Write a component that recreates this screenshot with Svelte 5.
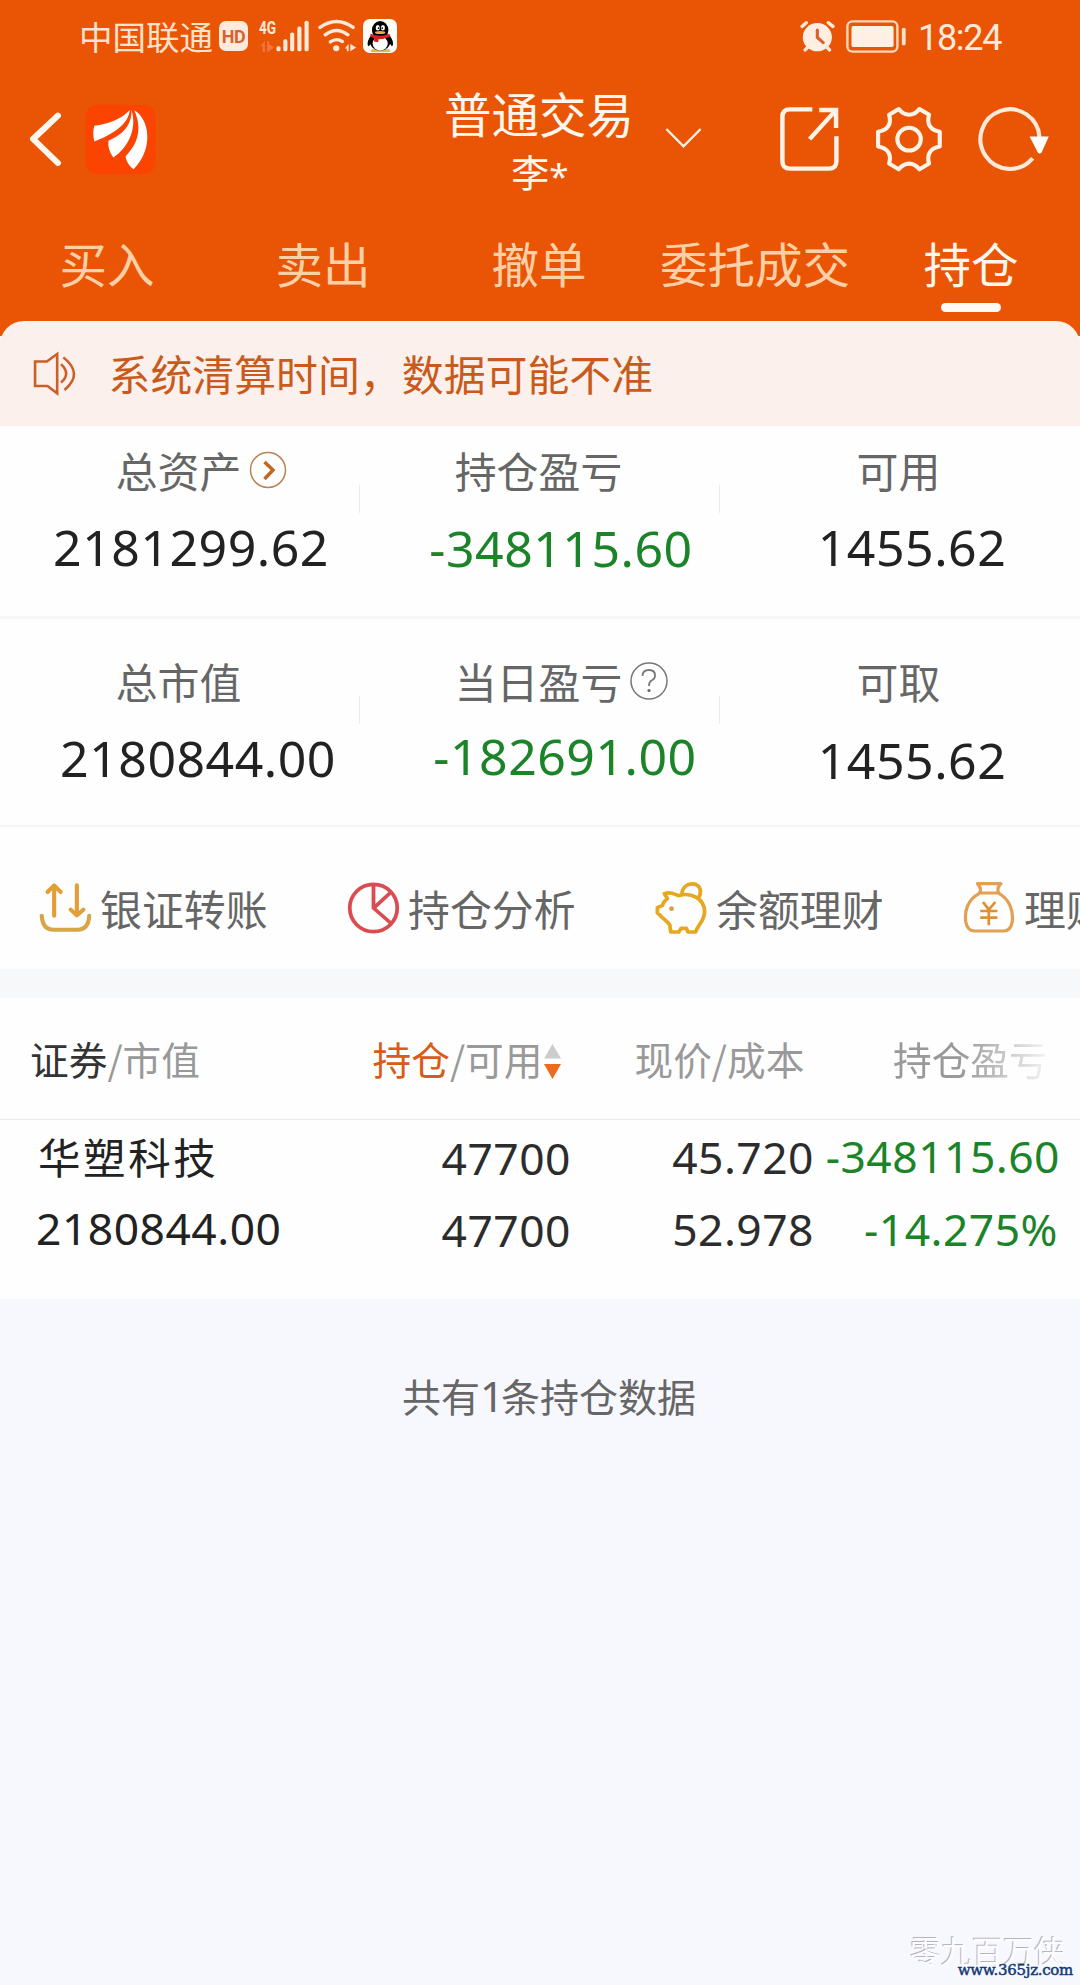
<script>
  const tabs = ['买入', '卖出', '撤单', '委托成交', '持仓'];
  let activeTab = $state('持仓');

  // dx / dy: 数値の微調整（px）
  const stats = [
    [
      { label: '总资产', value: '2181299.62', icon: 'arrow', dx: 11, dy: 0 },
      { label: '持仓盈亏', value: '-348115.60', down: true, dx: 21, dy: 1 },
      { label: '可用', value: '1455.62', dx: 12, dy: 0 }
    ],
    [
      { label: '总市值', value: '2180844.00', dx: 18, dy: 0 },
      { label: '当日盈亏', value: '-182691.00', icon: 'help', down: true, dx: 25, dy: -2 },
      { label: '可取', value: '1455.62', dx: 12, dy: 2 }
    ]
  ];

  const actions = [
    { icon: 'transfer', label: '银证转账' },
    { icon: 'pie', label: '持仓分析' },
    { icon: 'pig', label: '余额理财' },
    { icon: 'bag', label: '理财' }
  ];

  const holdings = [
    {
      name: '华塑科技',
      marketValue: '2180844.00',
      amount: '47700',
      available: '47700',
      price: '45.720',
      cost: '52.978',
      profit: '-348115.60',
      rate: '-14.275%'
    }
  ];
</script>

<div class="page">
  <header>
    <div class="status">
      <span class="carrier">中国联通</span>
      <span class="hd">HD</span>
      <svg class="signal" viewBox="753 57 146 101" width="50" height="34" preserveAspectRatio="none">
        <text x="753" y="102" font-size="54" textLength="50" lengthAdjust="spacingAndGlyphs" class="net">4G</text>
        <g fill="#f4743f">
          <path d="M757 138 L770 122 V155 H764 V138Z" />
          <path d="M777 122 H783 V132 L797 142 L783 152 L777 155Z" />
        </g>
        <g fill="#ffe9da">
          <rect x="804" y="138" width="12" height="15" rx="5" />
          <rect x="824" y="117" width="12" height="36" rx="5" />
          <rect x="844" y="97" width="12" height="56" rx="5" />
          <rect x="865" y="79" width="12" height="74" rx="5" />
          <rect x="886" y="62" width="12" height="91" rx="5" />
        </g>
      </svg>
      <svg class="wifi" viewBox="925 57 112 101" width="38.5" height="34" preserveAspectRatio="none">
        <g fill="none" stroke="#ffe9da" stroke-width="10" stroke-linecap="round">
          <path d="M931 82 Q979 47 1027 82" />
          <path d="M946 104 Q979 78 1012 104" />
          <path d="M961 125 Q979 112 996 124" />
        </g>
        <g fill="#ffe9da">
          <circle cx="978" cy="144" r="9" />
          <path d="M1003 145 L1014 131 V153 H1009 V145Z" />
          <path d="M1019 131 L1036 142 L1019 153Z" />
        </g>
      </svg>
      <svg class="qq" viewBox="1054 57 99 101" width="34" height="34" preserveAspectRatio="none">
        <rect x="1054" y="57" width="99" height="101" rx="20" fill="#fffdf8" />
        <ellipse cx="1092" cy="151" rx="16" ry="5" fill="#e8b64a" />
        <ellipse cx="1118" cy="151" rx="16" ry="5" fill="#e8b64a" />
        <path d="M1079 104 C1066 120 1065 136 1071 138 L1080 126 M1130 104 C1143 120 1144 136 1138 138 L1129 126" />
        <ellipse cx="1104" cy="123" rx="30" ry="28" />
        <ellipse cx="1104" cy="130" rx="22" ry="21" fill="#fff" />
        <ellipse cx="1104" cy="90" rx="24" ry="27" />
        <ellipse cx="1097" cy="83" rx="6" ry="8" fill="#fff" />
        <ellipse cx="1112" cy="83" rx="6" ry="8" fill="#fff" />
        <circle cx="1099" cy="84" r="2.5" />
        <circle cx="1110" cy="84" r="2.5" />
        <ellipse cx="1104" cy="97" rx="15" ry="4.5" fill="#e8b04a" />
        <path d="M1076 101 Q1104 112 1131 101 L1133 110 Q1118 117 1100 116 L1098 126 L1086 124 L1087 114 L1075 109Z" fill="#d5202c" />
      </svg>
      <svg class="alarm" viewBox="757 60 101 98" width="35" height="33" preserveAspectRatio="none">
        <circle cx="807" cy="111" r="42" fill="#ffeee2" />
        <g fill="none" stroke="#ffe9da" stroke-width="10" stroke-linecap="round">
          <path d="M763 79 L775 68 M839 68 L852 79 M780 140 L772 149 M834 140 L842 149" />
        </g>
        <path d="M807 90 V112 L824 127" fill="none" stroke="#d9622c" stroke-width="9" stroke-linecap="round" />
      </svg>
      <svg class="battery" viewBox="890 60 174 98" width="60" height="33" preserveAspectRatio="none">
        <rect x="894" y="64" width="145" height="90" rx="15" fill="none" stroke="#ffd6ba" stroke-width="7" />
        <rect x="906" y="78" width="122" height="62" rx="5" fill="#fff0e6" />
        <rect x="1052" y="84" width="11" height="51" rx="4" fill="#ffe2cd" />
      </svg>
      <span class="time">18:24</span>
    </div>

    <nav>
      <div class="nav-left">
        <svg viewBox="85 335 96 165" width="33" height="55" preserveAspectRatio="none">
          <path d="M169 346 L97 416 L169 488" fill="none" stroke="#fff6ee" stroke-width="18" stroke-linecap="round" stroke-linejoin="round" />
        </svg>
        <svg class="logo" viewBox="245 310 215 218" width="74" height="73" preserveAspectRatio="none">
          <rect x="250" y="315" width="203" height="207" rx="34" fill="#fb4402" />
          <g fill="#fff">
            <path d="M275 378 C318 373 355 357 378 331 C375 372 332 402 275 425 C271 408 271 392 275 378Z" />
            <path d="M383 331 C400 385 374 444 330 473 C318 456 314 440 316 423 C357 404 384 378 383 331Z" />
            <path d="M391 332 C434 356 450 446 389 508 C376 497 367 484 366 469 C404 430 414 384 391 332Z" />
          </g>
        </svg>
      </div>
      <div class="title">
        <h1>普通交易</h1>
        <p>李<span>*</span></p>
      </div>
      <svg class="caret" viewBox="364 380 108 66" width="37" height="22" preserveAspectRatio="none">
        <path d="M368 386 L418 438 L468 386" fill="none" stroke="#fff0e4" stroke-width="7" />
      </svg>
      <div class="nav-right">
        <svg viewBox="699 320 173 197" width="59.5" height="66" preserveAspectRatio="none">
          <g fill="none" stroke="#fff3e8" stroke-width="13">
            <path d="M793 330 H728 Q706 330 706 352 V485 Q706 507 728 507 H841 Q863 507 863 485 V410" />
            <path d="M813 332 H862 V386 M861 333 L785 419" />
          </g>
        </svg>
        <svg viewBox="977 318 196 197" width="67.5" height="66" preserveAspectRatio="none">
          <g fill="none" stroke="#fff3e8" stroke-width="12" stroke-linejoin="round">
            <path d="M1046 327 C1055 339 1065 344 1076 344 S1097 339 1106 327 L1134 344 C1126 372 1138 390 1165 395 V439 C1138 444 1126 462 1134 490 L1106 507 C1097 495 1087 490 1076 490 S1055 495 1046 507 L1018 490 C1026 462 1014 444 986 439 V395 C1014 390 1026 372 1018 344Z" />
            <circle cx="1076" cy="417" r="34" />
          </g>
        </svg>
        <svg viewBox="1274 318 208 197" width="71.5" height="66" preserveAspectRatio="none">
          <path d="M1433 474 A86 89 0 1 1 1453 412" fill="none" stroke="#ffe9da" stroke-width="12" />
          <path d="M1424 409 H1480 L1459 457 Q1453 463 1448 457Z" fill="#fff" />
        </svg>
      </div>
    </nav>

    <div class="tabs">
      {#each tabs as tab}
        <button class:active={tab === activeTab} onclick={() => (activeTab = tab)}>{tab}</button>
      {/each}
    </div>
  </header>

  <div class="notice">
    <svg viewBox="96 452 126 134" width="43.5" height="45" preserveAspectRatio="none">
      <g fill="none" stroke="#cb5f28" stroke-width="7.5">
        <path d="M166 461 V578 L138 556 H102 V483 H136Z" />
        <path d="M177 491 Q207 519 177 546" />
        <path d="M184 471 Q244 520 187 568" />
      </g>
    </svg>
    <span>系统清算时间，数据可能不准</span>
  </div>

  {#each stats as row, i}
    <section class="stats" class:second={i === 1}>
      {#each row as s}
        <div class="stat">
          <div class="label">
            {s.label}
            {#if s.icon === 'arrow'}
              <svg class="mark" viewBox="0 0 38 38" width="38" height="38">
                <circle cx="19" cy="19" r="17.5" fill="none" stroke="#b98352" stroke-width="1.5" />
                <path d="M15.5 11 L24 19 L15.5 28" fill="none" stroke="#c4671e" stroke-width="3.5" />
              </svg>
            {:else if s.icon === 'help'}
              <svg class="mark" viewBox="0 0 38 38" width="38" height="38">
                <circle cx="19" cy="19" r="18" fill="none" stroke="#777" stroke-width="1.5" />
                <path d="M12.5 14 Q12.5 8 19 8 Q25 8 25 13.5 Q25 17 21.5 18.5 Q19 20 19 24" fill="none" stroke="#777" stroke-width="1.8" />
                <circle cx="19" cy="28.5" r="1.6" fill="#666" />
              </svg>
            {/if}
          </div>
          <div class="value" class:down={s.down} style:transform="translate({s.dx}px, {s.dy}px)">{s.value}</div>
        </div>
      {/each}
    </section>
  {/each}

  <section class="actions">
    {#each actions as a}
      <div class="action">
        {#if a.icon === 'transfer'}
          <svg viewBox="113 97 154 156" width="53" height="52" preserveAspectRatio="none">
            <g fill="none" stroke="#e39e37" stroke-width="12" stroke-linecap="round" stroke-linejoin="round">
              <path d="M157 198 V108 M138 127 L157 107 L176 127" />
              <path d="M223 107 V196 M205 180 L223 197 L242 180" />
              <path d="M121 198 Q123 240 155 240 H225 Q257 240 259 198" stroke="#d8a548" />
            </g>
          </svg>
        {:else if a.icon === 'pie'}
          <svg viewBox="1007 97 154 156" width="53" height="52" preserveAspectRatio="none">
            <g fill="none" stroke="#d94c52" stroke-width="11">
              <ellipse cx="1084" cy="175" rx="69" ry="71" />
              <path d="M1084 104 V175 L1134 220 M1086 174 L1132 130" />
            </g>
          </svg>
        {:else if a.icon === 'pig'}
          <svg viewBox="334 97 154 156" width="53" height="52" preserveAspectRatio="none">
            <g fill="none" stroke="#e5a820" stroke-width="11" stroke-linejoin="round">
              <path d="M361 132 C378 126 390 132 402 138 C440 126 478 148 478 186 C478 214 458 226 452 247 H430 L425 236 H410 L403 247 H380 L377 226 C368 212 356 207 350 198 L341 190 V174 L356 167 C357 158 364 152 370 147Z" />
              <path d="M412 132 C416 94 464 94 466 124 Q466 138 459 146" />
            </g>
            <circle cx="382" cy="177" r="7" fill="#d9a04a" />
          </svg>
        {:else}
          <svg viewBox="1228 97 154 156" width="53" height="52" preserveAspectRatio="none">
            <g fill="none" stroke="#e2a054" stroke-width="9.5" stroke-linejoin="round">
              <path d="M1270 102 H1338 Q1324 118 1332 130 H1276 Q1284 118 1270 102Z" />
              <path d="M1276 131 C1240 150 1232 186 1236 216 Q1241 244 1262 244 H1345 Q1367 244 1371 216 C1375 186 1364 148 1332 131" />
              <path d="M1286 157 L1303 180 L1322 157 M1303 180 V227 M1278 184 H1328 M1278 204 H1328" stroke="#e08f35" stroke-width="8" />
            </g>
          </svg>
        {/if}
        <span>{a.label}</span>
      </div>
    {/each}
  </section>

  <div class="table-head">
    <div><b>证券</b>/市值</div>
    <div>
      <b class="sorted">持仓</b>/可用
      <svg class="sort" viewBox="0 0 17 36" width="17" height="36">
        <path d="M8.5 0 L17 14.5 H0Z" fill="#ccc" />
        <path d="M0 20 H17 L8.5 35Z" fill="#ee6a1c" />
      </svg>
    </div>
    <div>现价/成本</div>
    <div class="fade">持仓盈亏</div>
  </div>

  {#each holdings as h}
    <div class="holding">
      <div class="cell name">
        <div class="stock">{h.name}</div>
        <div>{h.marketValue}</div>
      </div>
      <div class="cell amount">
        <div>{h.amount}</div>
        <div>{h.available}</div>
      </div>
      <div class="cell price">
        <div>{h.price}</div>
        <div>{h.cost}</div>
      </div>
      <div class="cell profit">
        <div>{h.profit}</div>
        <div class="rate">{h.rate}</div>
      </div>
    </div>
  {/each}

  <p class="total">共有<span>1</span>条持仓数据</p>

  <div class="watermark">
    <span class="author">零九百万侠</span>
    <span class="site">www.365jz.com</span>
  </div>
</div>

<style>
  :global(body) {
    margin: 0;
    background: #f7f8fd;
  }
  .page {
    position: relative;
    width: 1080px;
    height: 1985px;
    overflow: hidden;
    background: #f7f8fd;
    font-family: 'Noto Sans CJK SC', 'Noto Sans', sans-serif;
  }
  svg {
    display: block;
    flex: none;
  }
  h1,
  p {
    margin: 0;
    font-weight: 400;
  }

  header {
    height: 336px;
    background: #e95504;
    color: #fff6ee;
  }
  .status {
    display: flex;
    align-items: center;
    box-sizing: border-box;
    height: 72px;
    padding-left: 79px;
  }
  .carrier {
    width: 140px;
    font-size: 33.5px;
    line-height: 44px;
    color: #ffe2cc;
    margin-top: -1px;
  }
  .hd {
    width: 29px;
    height: 30px;
    border-radius: 7px;
    background: #ffeadb;
    color: #d9622c;
    font-family: Roboto, sans-serif;
    font-size: 18px;
    font-weight: 700;
    line-height: 31px;
    text-align: center;
    letter-spacing: -0.5px;
  }
  .signal {
    margin-left: 11px;
    overflow: visible;
  }
  .net {
    font-family: Roboto, sans-serif;
    font-weight: 700;
    fill: #ffe9da;
  }
  .wifi {
    margin-left: 9px;
  }
  .qq {
    margin-left: 6px;
  }
  .alarm {
    margin-left: auto;
  }
  .battery {
    margin-left: 11px;
  }
  .time {
    width: 162px;
    padding-left: 12px;
    font-family: Roboto, sans-serif;
    font-size: 36px;
    font-weight: 400;
    line-height: 40px;
    letter-spacing: -1.3px;
    color: #ffe9da;
    margin-top: 4px;
  }

  nav {
    display: flex;
    align-items: center;
    height: 132px;
    padding-top: 2px;
    box-sizing: border-box;
  }
  .nav-left {
    display: flex;
    align-items: center;
    gap: 22px;
    width: 415px;
    padding-left: 29px;
  }
  .title {
    width: 190px;
    text-align: center;
    margin-top: -2px;
  }
  h1 {
    font-size: 47.5px;
    line-height: 60px;
  }
  .title p {
    font-size: 38px;
    line-height: 44px;
    margin-top: 6px;
    padding-left: 2px;
  }
  .title span {
    font-family: 'Noto Sans', sans-serif;
    font-size: 35px;
    line-height: 1;
    vertical-align: -2px;
  }
  .caret {
    margin: -3px 0 0 31px;
  }
  .nav-right {
    display: flex;
    gap: 35.5px;
    margin: -1px 0 0 auto;
    padding-right: 31px;
  }

  .tabs {
    display: grid;
    grid-template-columns: repeat(5, 1fr);
    padding-top: 29px;
    margin-left: -1px;
    margin-right: 1px;
  }
  button {
    display: flex;
    flex-direction: column;
    align-items: center;
    padding: 0;
    border: 0;
    background: none;
    font-family: inherit;
    font-size: 47.5px;
    line-height: 60px;
    color: #ffd0a8;
    white-space: nowrap;
  }
  button.active {
    color: #fff6ee;
  }
  button.active::after {
    content: '';
    width: 60px;
    height: 9px;
    margin-top: 10px;
    border-radius: 5px;
    background: #fffaf5;
  }

  .notice {
    position: relative;
    display: flex;
    align-items: center;
    height: 105px;
    margin-top: -15px;
    padding-left: 33px;
    border-radius: 24px 24px 0 0;
    background: #fbf0eb;
    color: #c95a1c;
    font-size: 41.9px;
    line-height: 50px;
  }
  .notice svg {
    margin-top: -1px;
  }
  .notice span {
    margin: -2px 0 0 32px;
  }

  .stats {
    display: grid;
    grid-template-columns: repeat(3, 360px);
    box-sizing: border-box;
    height: 193px;
    padding-top: 19px;
    background: #fefefe;
    border-bottom: 3px solid #f7f7f7;
  }
  .stats.second {
    height: 208px;
    padding-top: 37px;
    border-bottom: 2px solid #f4f4f4;
  }
  .stat {
    position: relative;
    text-align: center;
  }
  .stat + .stat::before {
    content: '';
    position: absolute;
    left: -1px;
    top: 40px;
    width: 1px;
    height: 28px;
    background: #ececec;
  }
  .label {
    position: relative;
    left: -1.5px;
    width: max-content;
    margin: 0 auto;
    font-size: 41.9px;
    line-height: 50px;
    color: #666;
  }
  .mark {
    position: absolute;
    left: calc(100% + 8px);
    top: 6px;
  }
  .value {
    margin-top: 22px;
    font-family: 'Noto Sans', sans-serif;
    font-size: 50px;
    line-height: 60px;
    letter-spacing: 0.5px;
    color: #222;
  }
  .value.down {
    color: #1c8428;
  }

  .actions {
    display: flex;
    box-sizing: border-box;
    height: 142px;
    padding: 55px 0 0 39px;
    background: #fefefe;
    overflow: hidden;
  }
  .action {
    display: flex;
    flex: none;
    width: 308px;
    gap: 8px;
    font-size: 41.9px;
    line-height: 52px;
    color: #666;
    white-space: nowrap;
  }

  .table-head {
    display: grid;
    grid-template-columns: 342.5px 262px 258.5px 170px;
    box-sizing: border-box;
    height: 151px;
    padding: 35px 0 0 30px;
    border-top: 29px solid #f7f8fa;
    border-bottom: 1px solid #e9e9ec;
    background: #fefefe;
    color: #999;
    font-size: 38.7px;
    line-height: 50px;
    white-space: nowrap;
  }
  .table-head div {
    display: flex;
  }
  .table-head b {
    font-weight: 400;
    color: #333;
  }
  .table-head .sorted {
    color: #d85b17;
  }
  .sort {
    margin: 11px 0 0 2px;
  }
  .fade {
    -webkit-mask-image: linear-gradient(90deg, #000 40%, transparent 96%);
    mask-image: linear-gradient(90deg, #000 40%, transparent 96%);
  }

  .holding {
    display: grid;
    grid-template-columns: 300px 235px 243px 246px;
    box-sizing: border-box;
    height: 179px;
    padding-left: 36px;
    background: #fefefe;
    color: #2c2c2c;
    font-family: 'Noto Sans', sans-serif;
    font-size: 44.4px;
    line-height: 72px;
    letter-spacing: 0.5px;
    white-space: nowrap;
  }
  .cell {
    text-align: right;
  }
  .name {
    text-align: left;
    color: #222;
    line-height: 72px;
  }
  .stock {
    padding-left: 2px;
    font-family: 'Noto Sans CJK SC', sans-serif;
    font-size: 42.5px;
    letter-spacing: 2.6px;
  }
  .amount {
    padding-top: 2px;
  }
  .price {
    padding-top: 1px;
  }
  .profit {
    color: #1c8428;
    line-height: 73px;
  }
  .rate {
    padding-right: 2px;
  }

  .total {
    padding: 71px 0 0 402px;
    font-size: 39px;
    line-height: 50px;
    color: #666;
  }
  .total span {
    font-family: 'Noto Sans', sans-serif;
    font-weight: 400;
    font-size: 42px;
    line-height: 1;
    letter-spacing: -3px;
  }

  .watermark {
    position: absolute;
    right: 7px;
    bottom: 5px;
    display: flex;
    flex-direction: column;
    align-items: flex-end;
  }
  .author {
    margin: 0 8px -8px 0;
    font-size: 31px;
    line-height: 36px;
    color: #fcfcff;
    text-shadow: -1px -1px 0 #b4b4ba;
  }
  .site {
    font-family: 'DejaVu Serif', 'Liberation Serif', serif;
    font-size: 15px;
    line-height: 20px;
    letter-spacing: -0.3px;
    color: #143a75;
    -webkit-text-stroke: 0.5px #143a75;
  }
</style>
